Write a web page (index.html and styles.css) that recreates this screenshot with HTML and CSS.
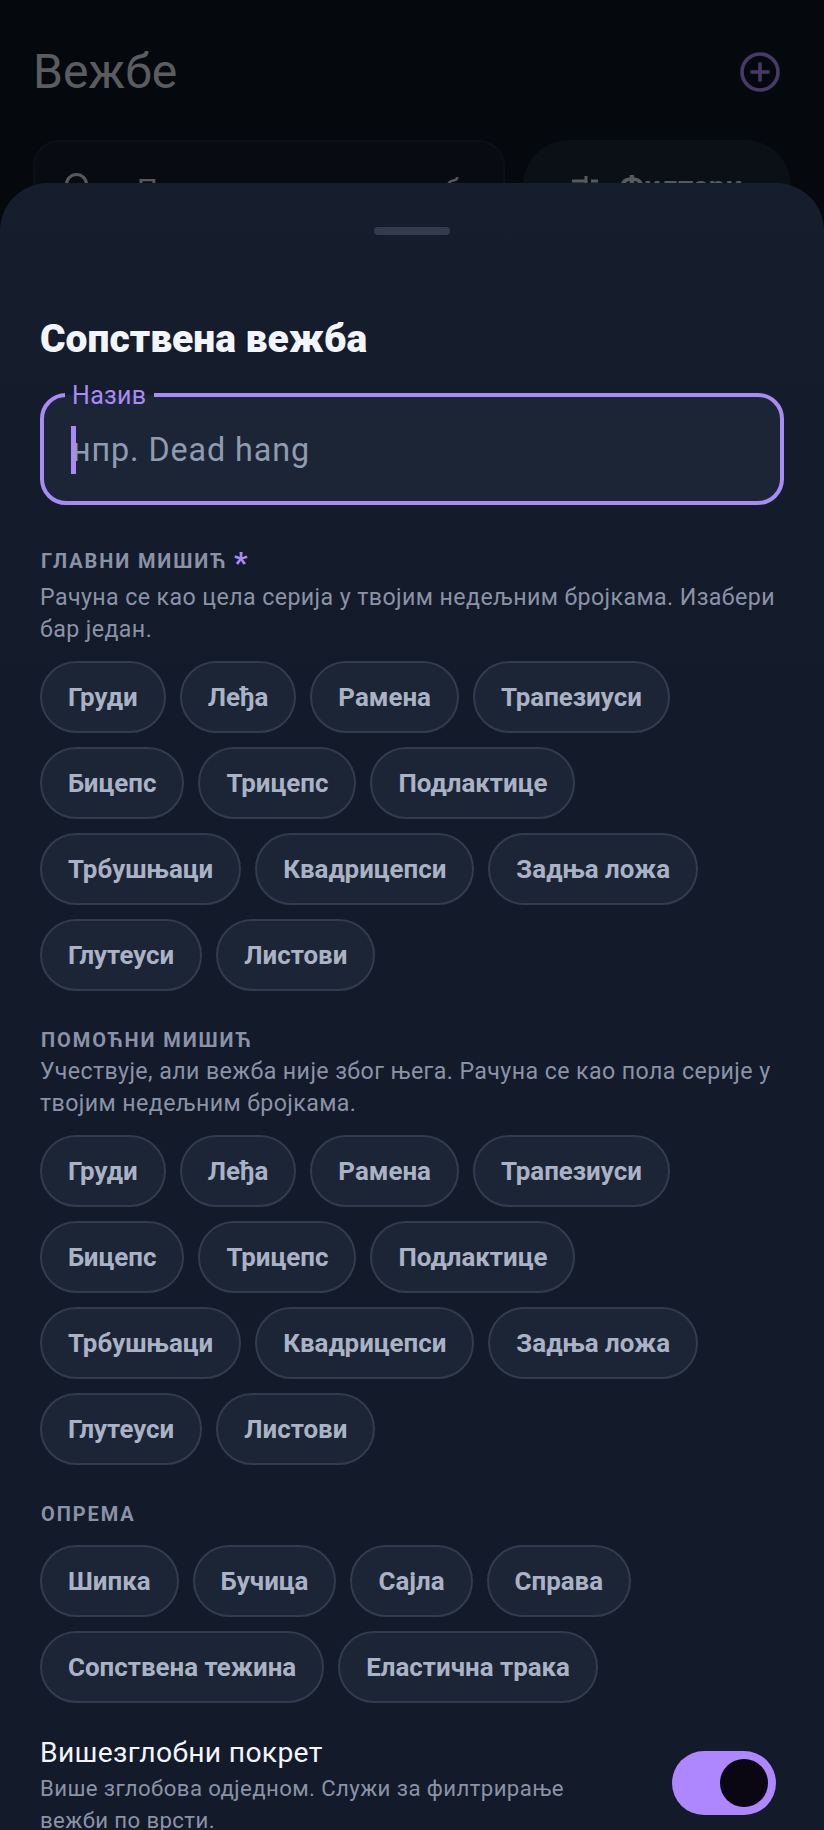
FILE: index.html
```html
<!DOCTYPE html>
<html lang="sr">
<head>
<meta charset="utf-8">
<title>Вежбе</title>
<link rel="stylesheet" href="styles.css">
</head>
<body>
<div class="app">
  <header class="top">
    <h1 class="page-title">Вежбе</h1>
    <svg class="add" viewBox="0 0 40 40" width="40" height="40"><circle cx="20" cy="20" r="18" fill="none" stroke="#a78bfa" stroke-width="3.6"/><path d="M20 10.5v19M10.5 20h19" stroke="#a78bfa" stroke-width="3.6" fill="none"/></svg>
  </header>
  <div class="tools">
    <div class="search">
      <svg class="ico lens" viewBox="0 0 26 26" width="26" height="26"><circle cx="11.5" cy="11.5" r="10" fill="none" stroke="#fff" stroke-width="3"/><path d="M18.5 18.5l7 7" stroke="#fff" stroke-width="3"/></svg>
      <span class="search-text">Претражи по типу вежбе</span>
    </div>
    <div class="filter">
      <svg class="ico" viewBox="0 0 26 26" width="26" height="26"><path d="M0 6h14M19 6h7M14 1v10M0 20h7M12 20h14M7 15v10" stroke="#fff" stroke-width="3" fill="none"/></svg>
      <span class="filter-text">Филтери</span>
    </div>
  </div>
  <div class="scrim"></div>
  <section class="sheet">
    <div class="handle"></div>
    <h2 class="sheet-title">Сопствена вежба</h2>
    <div class="field">
      <span class="legend">Назив</span>
      <span class="placeholder">нпр. Dead hang</span>
      <span class="caret"></span>
    </div>

    <h3 class="label first">ГЛАВНИ МИШИЋ <span class="star">*</span></h3>
    <p class="desc">Рачуна се као цела серија у твојим недељним бројкама. Изабери бар један.</p>
    <div class="chips">
      <span class="chip">Груди</span><span class="chip">Леђа</span><span class="chip">Рамена</span><span class="chip">Трапезиуси</span><span class="chip">Бицепс</span><span class="chip">Трицепс</span><span class="chip">Подлактице</span><span class="chip">Трбушњаци</span><span class="chip">Квадрицепси</span><span class="chip">Задња ложа</span><span class="chip">Глутеуси</span><span class="chip">Листови</span>
    </div>

    <h3 class="label second">ПОМОЋНИ МИШИЋ</h3>
    <p class="desc tight">Учествује, али вежба није због њега. Рачуна се као пола серије у твојим недељним бројкама.</p>
    <div class="chips">
      <span class="chip">Груди</span><span class="chip">Леђа</span><span class="chip">Рамена</span><span class="chip">Трапезиуси</span><span class="chip">Бицепс</span><span class="chip">Трицепс</span><span class="chip">Подлактице</span><span class="chip">Трбушњаци</span><span class="chip">Квадрицепси</span><span class="chip">Задња ложа</span><span class="chip">Глутеуси</span><span class="chip">Листови</span>
    </div>

    <h3 class="label third">ОПРЕМА</h3>
    <div class="chips gear">
      <span class="chip">Шипка</span><span class="chip">Бучица</span><span class="chip">Сајла</span><span class="chip">Справа</span><span class="chip">Сопствена тежина</span><span class="chip">Еластична трака</span>
    </div>

    <div class="row">
      <div class="row-text">
        <div class="row-title">Вишезглобни покрет</div>
        <p class="row-desc">Више зглобова одједном. Служи за филтрирање вежби по врсти.</p>
      </div>
      <div class="toggle"><span class="thumb"></span></div>
    </div>
  </section>
</div>
</body>
</html>
```

FILE: styles.css
```css
* { box-sizing: border-box; }
html, body { margin: 0; padding: 0; }
body { background: #0e1320; font-family: Roboto, "Noto Sans", sans-serif; }
.app { position: relative; width: 824px; height: 1830px; overflow: hidden; background: #0e131d; }

.top { display: flex; align-items: center; justify-content: space-between; padding: 44px 44px 0 33px; height: 100px; }
.page-title { margin: 0; font-size: 48px; font-weight: 400; line-height: 56px; color: #d8dbe2; }
.add { display: block; }

.tools { display: flex; gap: 18px; padding: 40px 33px 0; }
.search { width: 472px; height: 96px; border: 2px solid #1c2535; border-radius: 26px; background: #151c2a; display: flex; align-items: center; gap: 46px; padding: 0 30px; }
.filter { width: 268px; height: 96px; border-radius: 46px; background: #1c2535; display: flex; align-items: center; justify-content: center; gap: 22px; }
.ico { flex: none; opacity: .8; }
.lens { margin-top: -4px; }
.search-text { margin-top: 4px; font-size: 29px; color: #cfd5e0; white-space: nowrap; }
.filter-text { margin-bottom: 3px; font-size: 30px; font-weight: 700; color: #cfd5e0; }

.scrim { position: absolute; inset: 0; background: rgba(0, 0, 0, .58); }

.sheet { position: absolute; left: 0; right: 0; top: 183px; bottom: 0; overflow: hidden; background: linear-gradient(#161e2e, #131a2a 30%); border-radius: 48px 48px 0 0; padding: 44px 40px 0; }
.handle { width: 76px; height: 8px; border-radius: 4px; background: #333c4d; margin: 0 auto; }
.sheet-title { margin: 82px 0 0; font-size: 39px; line-height: 44px; font-weight: 900; color: #f2f5fb; }

.field { position: relative; height: 112px; margin-top: 32px; border: 4px solid #a98bf5; border-radius: 26px; background: #1c2535; display: flex; align-items: center; padding: 2px 0 0 28px; }
.legend { position: absolute; left: 21px; top: -11px; padding: 0 8px 0 7px; line-height: 20px; font-size: 25px; letter-spacing: .3px; color: #a98bf5; background: linear-gradient(#141b2a 45%, #1c2535 45%); }
.caret { position: absolute; left: 27px; top: 29px; width: 5px; height: 48px; background: #a98bf5; }
.placeholder { font-size: 32.3px; letter-spacing: .9px; color: #8f9bb0; line-height: 40px; }

.label { margin: 0; padding-left: 1px; font-size: 20px; line-height: 24px; font-weight: 700; letter-spacing: 1.9px; color: #8a93a6; }
.label.first { margin-top: 44px; }
.label.second { margin-top: 37px; }
.label.third { margin-top: 37px; }
.star { color: #a98bf5; font-size: 30px; line-height: 20px; vertical-align: -5px; letter-spacing: 0; font-weight: 700; }
.desc { margin: 8px 0 0; font-size: 23.2px; line-height: 32px; letter-spacing: .4px; color: #8a93a6; }
.desc.tight { margin-top: 3px; }

.chips { display: flex; flex-wrap: wrap; gap: 14px; margin-top: 16px; }
.chips.gear { margin-top: 19px; }
.chip { height: 72px; padding: 0 26px; border: 2px solid #323c4e; border-radius: 36px; background: #1c2535; color: #aab2c5; font-size: 25.9px; font-weight: 700; line-height: 68px; white-space: nowrap; }

.row { display: flex; justify-content: space-between; align-items: flex-start; margin-top: 33px; padding-right: 8px; }
.row-text { width: 560px; }
.row-title { font-size: 28.3px; line-height: 34px; letter-spacing: .3px; color: #f2f5fb; }
.row-desc { margin: 2px 0 0; font-size: 22.2px; line-height: 32px; letter-spacing: .4px; color: #8a93a6; }
.toggle { width: 104px; height: 64px; margin-top: 15px; border-radius: 32px; background: #ae86fd; display: flex; align-items: center; justify-content: flex-end; padding-right: 8px; }
.thumb { width: 48px; height: 48px; border-radius: 50%; background: #0a0612; }
```
